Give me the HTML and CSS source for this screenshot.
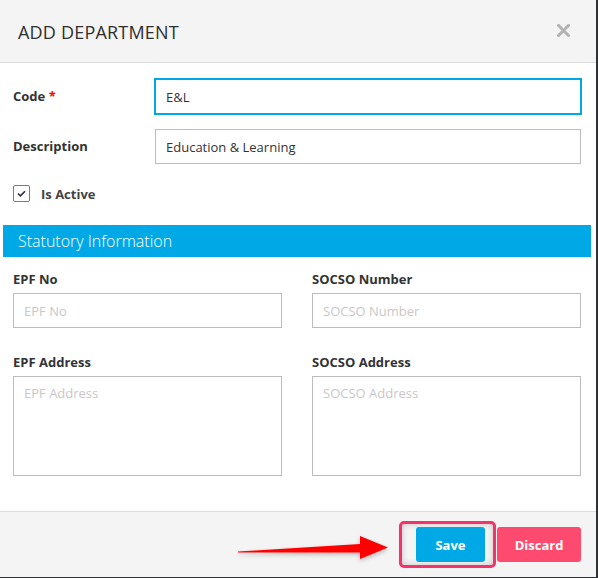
FILE: index.html
```html
<!DOCTYPE html>
<html>
<head>
<meta charset="utf-8">
<link rel="stylesheet" href="styles.css">
</head>
<body>
<div class="modal">
  <div class="modal-header">
    <h2 class="modal-title">ADD DEPARTMENT</h2>
    <span class="close">
      <svg width="13" height="13" viewBox="0 0 13 13"><path d="M1.5 1.5 L11.5 11.5 M11.5 1.5 L1.5 11.5" stroke="#b3b3b3" stroke-width="3" stroke-linecap="square"/></svg>
    </span>
  </div>
  <div class="modal-body">
    <div class="row">
      <label class="lbl">Code <span class="req">*</span></label>
      <div class="input focused">E&amp;L</div>
    </div>
    <div class="row">
      <label class="lbl">Description</label>
      <div class="input">Education &amp; Learning</div>
    </div>
    <div class="check-row">
      <span class="checkbox">
        <svg width="9" height="7" viewBox="0 0 9 7"><path d="M1 3.5 L3.4 5.8 L8 1.2" fill="none" stroke="#2b2b3a" stroke-width="1.6"/></svg>
      </span>
      <span class="check-label">Is Active</span>
    </div>
    <div class="section-bar">Statutory Information</div>
    <div class="grid">
      <div class="field">
        <div class="flbl">EPF No</div>
        <div class="input ph">EPF No</div>
      </div>
      <div class="field">
        <div class="flbl">SOCSO Number</div>
        <div class="input ph">SOCSO Number</div>
      </div>
      <div class="field">
        <div class="flbl">EPF Address</div>
        <div class="textarea ph">EPF Address</div>
      </div>
      <div class="field">
        <div class="flbl">SOCSO Address</div>
        <div class="textarea ph">SOCSO Address</div>
      </div>
    </div>
  </div>
  <div class="modal-footer">
    <svg class="arrow" width="160" height="30" viewBox="0 0 160 30">
      <defs>
        <filter id="sh" x="-10%" y="-50%" width="120%" height="200%">
          <feDropShadow dx="0" dy="2" stdDeviation="2" flood-color="#000" flood-opacity="0.25"/>
        </filter>
      </defs>
      <polygon filter="url(#sh)" points="2,17.5 124,10 124,2 152,13.5 124,25 124,18.5 2,18.6" fill="#ff0000"/>
    </svg>
    <span class="highlight"><button class="btn save">Save</button></span>
    <button class="btn discard">Discard</button>
  </div>
</div>
</body>
</html>
```

FILE: styles.css
```css
html, body {
  margin: 0;
  padding: 0;
}
body {
  background: #2e3236;
  width: 598px;
  height: 578px;
  overflow: hidden;
  font-family: "Open Sans", "Liberation Sans", sans-serif;
  color: #333;
}
.modal {
  width: 596px;
  height: 577px;
  background: #fff;
  display: flex;
  flex-direction: column;
  position: relative;
}
.modal-header {
  height: 62px;
  background: #f4f4f4;
  border-bottom: 1px solid #dcdcdc;
  display: flex;
  align-items: center;
  justify-content: space-between;
  padding: 0 26px 0 18px;
  box-sizing: content-box;
}
.modal-title {
  margin: 0;
  font-size: 18px;
  font-weight: 400;
  color: #2f2f2f;
  letter-spacing: 0.2px;
  padding-top: 2px;
}
.close {
  display: flex;
  margin-top: -1px;
}
.modal-body {
  flex: 1;
  padding: 16px 15px 0 13px;
}
.row {
  display: flex;
  align-items: center;
  margin-bottom: 15px;
}
.lbl {
  width: 142px;
  font-size: 13px;
  font-weight: 700;
  color: #333;
  margin-top: -2px;
}
.req {
  color: #ff0000;
}
.input {
  flex: 1;
  height: 35px;
  box-sizing: border-box;
  border: 1px solid #bcbcbc;
  padding: 0 10px;
  display: flex;
  align-items: center;
  font-size: 13px;
  color: #333;
}
.input.focused {
  border-color: #00a8e6;
  box-shadow: 0 0 0 1px #00a8e6;
}
.ph {
  color: #c8c8c8;
}
.check-row {
  display: flex;
  align-items: center;
  margin-top: 21px;
  height: 17px;
}
.checkbox {
  width: 17px;
  height: 17px;
  box-sizing: border-box;
  border: 1px solid #7a7a7a;
  border-radius: 2px;
  display: flex;
  align-items: center;
  justify-content: center;
}
.check-label {
  margin-left: 11px;
  font-size: 13px;
  font-weight: 700;
  color: #444;
}
.section-bar {
  margin: 23px -10px 0 -10px;
  height: 32px;
  background: #00a8e6;
  color: #fff;
  font-size: 16px;
  font-weight: 300;
  display: flex;
  align-items: center;
  padding-left: 15px;
  padding-bottom: 1px;
  box-sizing: border-box;
}
.grid {
  display: grid;
  grid-template-columns: 269px 269px;
  column-gap: 30px;
  row-gap: 25px;
  margin-top: 13px;
}
.flbl {
  font-size: 13px;
  font-weight: 700;
  color: #333;
  line-height: 18px;
  margin-bottom: 5px;
}
.field .input {
  padding: 0 10px;
}
.textarea {
  height: 100px;
  box-sizing: border-box;
  border: 1px solid #bcbcbc;
  padding: 7px 10px;
  font-size: 13px;
}
.modal-footer {
  height: 65px;
  background: #f4f4f4;
  border-top: 1px solid #dcdcdc;
  display: flex;
  align-items: center;
  justify-content: flex-end;
  padding-right: 15px;
  position: relative;
}
.highlight {
  display: flex;
  border: 3px solid #f5336b;
  border-radius: 5px;
  padding: 3px 8px 3px 14px;
  box-shadow: inset 0 0 6px rgba(0,0,0,0.2);
  margin-right: 1px;
}
.btn {
  height: 35px;
  border: none;
  border-radius: 3px;
  color: #fff;
  font-family: "Open Sans", "Liberation Sans", sans-serif;
  font-size: 13px;
  font-weight: 700;
  cursor: pointer;
}
.save {
  width: 69px;
  background: #00a8e6;
}
.discard {
  width: 84px;
  background: #ff4a70;
}
.arrow {
  position: absolute;
  left: 236px;
  top: 22px;
}
```
